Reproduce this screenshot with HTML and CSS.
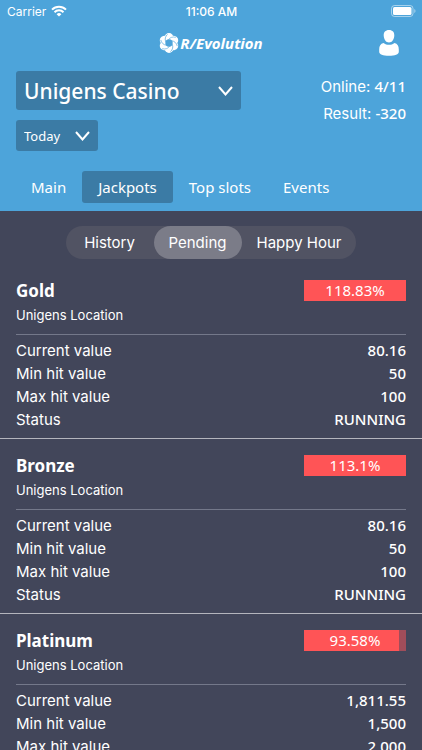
FILE: index.html
```html
<!DOCTYPE html>
<html lang="en">
<head>
  <meta charset="UTF-8">
  <meta name="viewport" content="width=device-width, initial-scale=1.0">
  <title>R/Evolution - Jackpots</title>
  <link rel="stylesheet" href="styles.css">
</head>
<body>

  <header class="header">
    <div class="status-bar">
      <div class="carrier">
        <span>Carrier</span>
        <svg width="16" height="12" viewBox="0 0 16 12" fill="none" stroke="#fff" stroke-width="2">
          <path d="M1 4.6a10 10 0 0 1 14 0"/>
          <path d="M3.5 7.2a6.4 6.4 0 0 1 9 0"/>
          <path d="M8 11.6L5.6 9.2a3.5 3.5 0 0 1 4.8 0z" fill="#fff" stroke="none"/>
        </svg>
      </div>
      <div class="time">11:06 AM</div>
      <div class="battery">
        <svg width="25" height="12" viewBox="0 0 25 12">
          <rect x="0.5" y="0.5" width="21.5" height="11" rx="3" fill="none" stroke="#fff" stroke-opacity="0.5"/>
          <rect x="2" y="2" width="18.5" height="8" rx="1.5" fill="#fff"/>
          <path d="M23.3 4v4c1.6-.6 1.6-3.4 0-4z" fill="#fff" fill-opacity="0.5"/>
        </svg>
      </div>
    </div>

    <div class="top-bar">
      <a class="logo" href="#">
        <svg width="20" height="20" viewBox="-10 -10 20 20">
          <defs>
            <circle id="lobe" cx="0" cy="-5.4" r="4.5"/>
            <path id="cut" d="M-.6-3.4C1-5.6 4-6.6 6.8-5.6"/>
          </defs>
          <g fill="#fff">
            <use href="#lobe"/>
            <use href="#lobe" transform="rotate(60)"/>
            <use href="#lobe" transform="rotate(120)"/>
            <use href="#lobe" transform="rotate(180)"/>
            <use href="#lobe" transform="rotate(240)"/>
            <use href="#lobe" transform="rotate(300)"/>
          </g>
          <g fill="none" stroke="#4da4da" stroke-width="0.6">
            <use href="#cut"/>
            <use href="#cut" transform="rotate(60)"/>
            <use href="#cut" transform="rotate(120)"/>
            <use href="#cut" transform="rotate(180)"/>
            <use href="#cut" transform="rotate(240)"/>
            <use href="#cut" transform="rotate(300)"/>
          </g>
          <circle r="3.7" fill="#4da4da"/>
        </svg>
        <span>R/Evolution</span>
      </a>
      <button class="profile" type="button" aria-label="Profile">
        <svg width="20" height="26" viewBox="0 0 20 26" fill="#fff">
          <path d="M10 0c3.6 0 5.5 2.2 5.3 5.6C15.1 9.8 13 12.6 10 12.6S4.9 9.8 4.7 5.6C4.5 2.2 6.4 0 10 0z"/>
          <path d="M4.500 13C6 14.300 8 14.800 10 14.800s4-.5 5.500-1.800c3 .8 4.300 2.800 4.300 6.400v2.400C19.800 24.400 16 25.800 10 25.800S.2 24.400.2 21.800v-2.400c0-3.600 1.300-5.600 4.300-6.400z"/>
        </svg>
      </button>
    </div>

    <div class="summary">
      <div class="filters">
        <div class="dropdown casino">
          <select aria-label="Casino">
            <option>Unigens Casino</option>
          </select>
          <svg width="15" height="10" viewBox="0 0 15 10" fill="none" stroke="#fff" stroke-width="2"><path d="M1 1l6.5 7.5L14 1"/></svg>
        </div>
        <div class="dropdown period">
          <select aria-label="Period">
            <option>Today</option>
          </select>
          <svg width="15" height="10" viewBox="0 0 15 10" fill="none" stroke="#fff" stroke-width="2"><path d="M1 1l6.5 7.5L14 1"/></svg>
        </div>
      </div>
      <div class="stats">
        <div>Online: <b>4/11</b></div>
        <div>Result: <b>-320</b></div>
      </div>
    </div>

    <nav class="tabs">
      <a href="#">Main</a>
      <a href="#" class="active">Jackpots</a>
      <a href="#">Top slots</a>
      <a href="#">Events</a>
    </nav>
  </header>

  <main>
    <div class="segments">
      <button type="button">History</button>
      <button type="button" class="active">Pending</button>
      <button type="button">Happy Hour</button>
    </div>

    <section class="jackpot">
      <div class="jackpot-head">
        <div>
          <h2>Gold</h2>
          <p>Unigens Location</p>
        </div>
        <div class="progress">
          <div class="bar" style="width: 100%"></div>
          <span>118.83%</span>
        </div>
      </div>
      <dl>
        <div><dt>Current value</dt><dd>80.16</dd></div>
        <div><dt>Min hit value</dt><dd>50</dd></div>
        <div><dt>Max hit value</dt><dd>100</dd></div>
        <div><dt>Status</dt><dd>RUNNING</dd></div>
      </dl>
    </section>

    <section class="jackpot">
      <div class="jackpot-head">
        <div>
          <h2>Bronze</h2>
          <p>Unigens Location</p>
        </div>
        <div class="progress">
          <div class="bar" style="width: 100%"></div>
          <span>113.1%</span>
        </div>
      </div>
      <dl>
        <div><dt>Current value</dt><dd>80.16</dd></div>
        <div><dt>Min hit value</dt><dd>50</dd></div>
        <div><dt>Max hit value</dt><dd>100</dd></div>
        <div><dt>Status</dt><dd>RUNNING</dd></div>
      </dl>
    </section>

    <section class="jackpot">
      <div class="jackpot-head">
        <div>
          <h2>Platinum</h2>
          <p>Unigens Location</p>
        </div>
        <div class="progress">
          <div class="bar" style="width: 93.58%"></div>
          <span>93.58%</span>
        </div>
      </div>
      <dl>
        <div><dt>Current value</dt><dd>1,811.55</dd></div>
        <div><dt>Min hit value</dt><dd>1,500</dd></div>
        <div><dt>Max hit value</dt><dd>2,000</dd></div>
      </dl>
    </section>
  </main>

</body>
</html>
```
FILE: styles.css
```css
* {
  margin: 0;
  padding: 0;
  box-sizing: border-box;
}

html {
  height: 100%;
  overflow: hidden;
}

body {
  height: 100%;
  overflow-y: auto;
  scrollbar-width: none;
  font-family: "Inter", sans-serif;
  font-size: 15px;
  background-color: #42465a;
  color: #fff;
}

a {
  color: inherit;
  text-decoration: none;
}

button,
select {
  border: none;
  background: none;
  color: inherit;
  font: inherit;
  cursor: pointer;
}

svg {
  display: block;
}

/* Header */
.header {
  background-color: #4da4da;
  padding-bottom: 8px;
}

.status-bar,
.top-bar {
  display: grid;
  grid-template-columns: 1fr auto 1fr;
  align-items: center;
}

.status-bar {
  height: 22px;
  padding: 0 6px 0 7px;
  font-size: 12px;
}

.carrier {
  display: flex;
  align-items: center;
  gap: 5px;
}

.time {
  font-weight: 500;
}

.battery {
  justify-self: end;
}

.top-bar {
  height: 42px;
  padding: 0 23px;
}

.logo {
  grid-column: 2;
  display: flex;
  align-items: center;
  gap: 1px;
  font-family: "Noto Sans", sans-serif;
  font-size: 15px;
  font-weight: 700;
  font-style: italic;
}

.profile {
  justify-self: end;
}

.summary {
  display: flex;
  justify-content: space-between;
  padding: 7px 16px 0;
}

.filters {
  display: flex;
  flex-direction: column;
  align-items: flex-start;
  gap: 10px;
  width: 225px;
}

.dropdown {
  position: relative;
  font-family: "Noto Sans", sans-serif;
}

.dropdown select {
  appearance: none;
  width: 100%;
  height: 100%;
  padding: 0 8px;
  border-radius: 3px;
  background-color: #3b7ba5;
}

.dropdown svg {
  position: absolute;
  right: 8px;
  top: 50%;
  transform: translateY(-50%);
  pointer-events: none;
}

.casino {
  width: 100%;
  height: 39px;
  font-size: 21px;
  font-weight: 500;
}

.period {
  width: 82px;
  height: 31px;
  font-size: 13px;
}

.stats {
  padding-top: 2px;
  line-height: 26px;
  text-align: right;
}

.stats b {
  font-family: "Noto Sans", sans-serif;
  font-weight: 500;
}

.tabs {
  display: flex;
  padding: 20px 15px 0;
  font-family: "Noto Sans", sans-serif;
}

.tabs a {
  padding: 0 16px;
  border-radius: 3px;
  line-height: 32px;
}

.tabs .active {
  background-color: #3b7ba5;
}

/* History / Pending / Happy Hour */
.segments {
  display: flex;
  width: fit-content;
  margin: 15px auto 5px;
  border-radius: 17px;
  background-color: #515363;
}

.segments button {
  min-width: 88px;
  height: 33px;
  padding: 0 15px;
  border-radius: 17px;
}

.segments .active {
  background-color: #7b7c88;
}

/* Jackpot list */
.jackpot {
  padding: 15px 16px 7px;
  border-bottom: 1px solid #b4b5bd;
}

.jackpot-head {
  display: flex;
  justify-content: space-between;
  padding-bottom: 7px;
  border-bottom: 1px solid #74788a;
  line-height: 24px;
}

.jackpot h2 {
  font-family: "Noto Sans", sans-serif;
  font-size: 17px;
  font-weight: 700;
}

.jackpot p {
  font-size: 13px;
}

.progress {
  position: relative;
  width: 102px;
  height: 21px;
  margin-top: 1px;
  background-color: #a04d5a;
  font-family: "Noto Sans", sans-serif;
  line-height: 21px;
  text-align: center;
}

.progress .bar {
  height: 100%;
  background-color: #ff5456;
}

.progress span {
  position: absolute;
  inset: 0;
}

.jackpot dl {
  padding-top: 4px;
}

.jackpot dl div {
  display: flex;
  justify-content: space-between;
  line-height: 23px;
}

.jackpot dd {
  font-family: "Noto Sans", sans-serif;
  font-weight: 500;
}
```
